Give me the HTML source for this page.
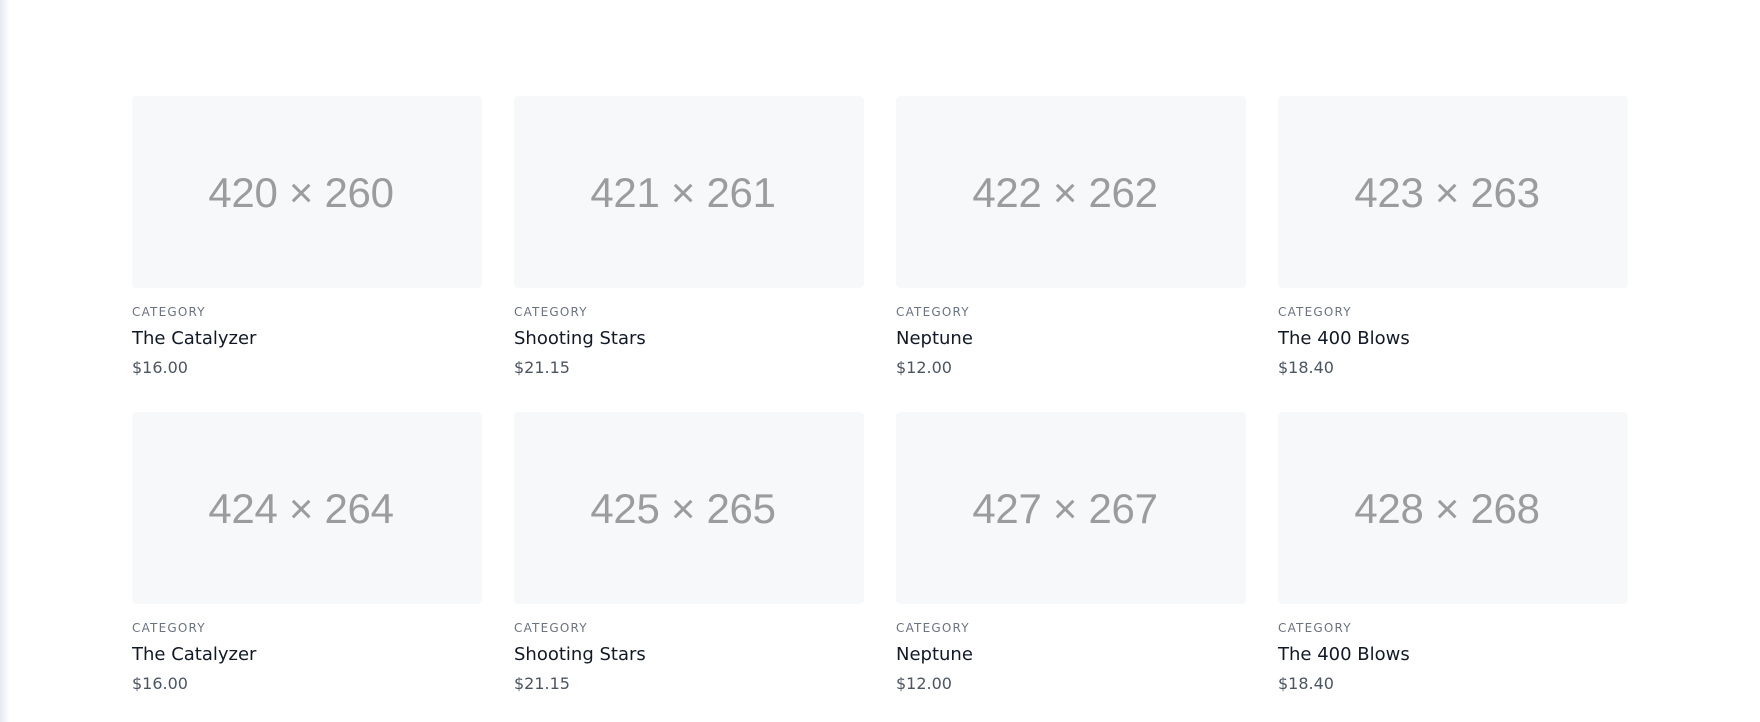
<!DOCTYPE html>
<html><head><meta charset="utf-8"><style>
html,body{margin:0;padding:0;width:1760px;height:722px;overflow:hidden;background:#fff;font-family:"DejaVu Sans","Liberation Sans",sans-serif;position:relative}
.edge{position:absolute;left:0;top:0;width:10px;height:722px;background:linear-gradient(to right,#e6e9f0,rgba(255,255,255,0))}
.card{position:absolute;width:350px}
.img{width:350px;height:192px;background:#f7f8fa;border-radius:4px;display:flex;align-items:center;justify-content:center;color:#9c9c9c;font-family:"Liberation Sans",sans-serif;font-weight:300;font-size:42px;letter-spacing:-0.3px;box-sizing:border-box;padding-right:12px;padding-top:2px}
.cat{position:absolute;top:208px;left:0;font-size:12px;letter-spacing:1.2px;color:#6b7280;line-height:16px}
.title{position:absolute;top:231px;left:0;font-size:18px;color:#111827;line-height:24px}
.price{position:absolute;top:262px;left:0;font-size:16px;color:#4b5563;line-height:20px}
</style></head><body>
<div class="edge"></div>
<div class="card" style="left:132px;top:96px"><div class="img">420 × 260</div><div class="cat">CATEGORY</div><div class="title">The Catalyzer</div><div class="price">$16.00</div></div>
<div class="card" style="left:514px;top:96px"><div class="img">421 × 261</div><div class="cat">CATEGORY</div><div class="title">Shooting Stars</div><div class="price">$21.15</div></div>
<div class="card" style="left:896px;top:96px"><div class="img">422 × 262</div><div class="cat">CATEGORY</div><div class="title">Neptune</div><div class="price">$12.00</div></div>
<div class="card" style="left:1278px;top:96px"><div class="img">423 × 263</div><div class="cat">CATEGORY</div><div class="title">The 400 Blows</div><div class="price">$18.40</div></div>
<div class="card" style="left:132px;top:412px"><div class="img">424 × 264</div><div class="cat">CATEGORY</div><div class="title">The Catalyzer</div><div class="price">$16.00</div></div>
<div class="card" style="left:514px;top:412px"><div class="img">425 × 265</div><div class="cat">CATEGORY</div><div class="title">Shooting Stars</div><div class="price">$21.15</div></div>
<div class="card" style="left:896px;top:412px"><div class="img">427 × 267</div><div class="cat">CATEGORY</div><div class="title">Neptune</div><div class="price">$12.00</div></div>
<div class="card" style="left:1278px;top:412px"><div class="img">428 × 268</div><div class="cat">CATEGORY</div><div class="title">The 400 Blows</div><div class="price">$18.40</div></div>
</body></html>
